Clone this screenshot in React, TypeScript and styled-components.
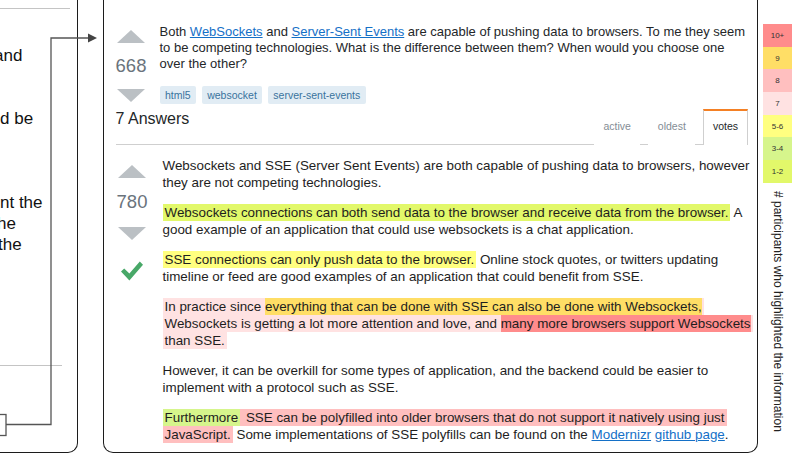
import React from 'react';
import styled, { createGlobalStyle } from 'styled-components';

const GlobalStyle = createGlobalStyle`
  html, body {
    margin: 0;
    padding: 0;
    background: #fff;
  }
  body {
    width: 808px;
    height: 455px;
    overflow: hidden;
    font-family: 'Liberation Sans', Arial, sans-serif;
  }
`;

const Figure = styled.div`
  position: relative;
  display: flex;
  align-items: flex-start;
  width: 808px;
  height: 455px;
  color: #242729;
`;

/* left, cut-off panel */
const SidePanel = styled.div`
  box-sizing: border-box;
  flex-shrink: 0;
  width: 78px;
  height: 453px;
  padding-top: 8px;
  border-right: 1.5px solid #1c1c1c;
  border-bottom: 1.5px solid #1c1c1c;
  border-bottom-right-radius: 10px;
  overflow: hidden;
  display: flex;
  flex-direction: column;
`;

const SideRule = styled.div<{ $width: number; $top?: number }>`
  width: ${({ $width }) => $width}px;
  height: 1px;
  margin-top: ${({ $top }) => $top ?? 0}px;
  background: #c4c4c4;
`;

const SideText = styled.div`
  margin-top: 35.5px;
  font-size: 17px;
  line-height: 21px;
  color: #111;
  white-space: nowrap;
`;

const SideLine = styled.div<{ $shift?: number }>`
  height: 21px;
  margin-left: ${({ $shift }) => -($shift ?? 0)}px;
`;

/* middle, Q&A panel */
const MainPanel = styled.div`
  box-sizing: border-box;
  flex-shrink: 0;
  width: 655px;
  height: 453px;
  margin-left: 25px;
  padding-top: 8px;
  border: 1.5px solid #1c1c1c;
  border-top: none;
  border-radius: 0 0 10px 10px;
  display: flex;
  flex-direction: column;
`;

const TopRule = styled.div`
  height: 1px;
  margin: 0 9.5px 0 8.5px;
  background: #cfcfcf;
`;

const PostRow = styled.div<{ $top: number; $left: number; $gap: number }>`
  display: flex;
  align-items: flex-start;
  margin-top: ${({ $top }) => $top}px;
  padding-left: ${({ $left }) => $left}px;
  gap: ${({ $gap }) => $gap}px;
`;

const VoteColumn = styled.div<{ $top: number; $gap: number }>`
  flex-shrink: 0;
  width: 37px;
  padding-top: ${({ $top }) => $top}px;
  display: flex;
  flex-direction: column;
  align-items: center;
  gap: ${({ $gap }) => $gap}px;
`;

const VoteArrow = styled.div<{ $down?: boolean }>`
  width: 0;
  height: 0;
  border-left: 14px solid transparent;
  border-right: 14px solid transparent;
  ${({ $down }) =>
    $down ? 'border-top: 13px solid #bbc0c4;' : 'border-bottom: 13px solid #bbc0c4;'}
`;

const VoteCount = styled.div`
  font-size: 18.5px;
  line-height: 22px;
  color: #6a737c;
`;

const Accepted = styled.svg`
  width: 22px;
  height: 20px;
  margin-top: 8px;
  fill: #48a868;
`;

const QuestionBody = styled.div`
  padding-top: 1.5px;
  font-size: 13px;
  line-height: 16px;
  white-space: nowrap;
`;

const TagList = styled.div`
  display: flex;
  gap: 5.5px;
  margin-top: 14px;
`;

const Tag = styled.span`
  height: 18px;
  padding: 0 5.5px;
  font-size: 10.5px;
  line-height: 18px;
  color: #39739d;
  background: #e1ecf4;
  border-radius: 2px;
`;

const Link = styled.a`
  color: #1470c7;
  text-decoration: underline;
  text-underline-offset: 1px;
`;

const AnswersHeader = styled.div`
  box-sizing: border-box;
  height: 37px;
  margin: 5px 9.5px 0 11.5px;
  border-bottom: 1px solid #cfcfcf;
  display: flex;
  justify-content: space-between;
  align-items: flex-end;
`;

const AnswersTitle = styled.div`
  align-self: flex-start;
  font-size: 16px;
  line-height: 20px;
  color: #242729;
`;

const Tabs = styled.div`
  display: flex;
  gap: 8px;
`;

const Tab = styled.div<{ $active?: boolean }>`
  box-sizing: border-box;
  height: 36px;
  margin-bottom: -1px;
  padding: 0 8.5px 3px;
  display: flex;
  align-items: center;
  font-size: 10.5px;
  color: ${({ $active }) => ($active ? '#242729' : '#848d95')};
  background: #fff;
  border-top: 2px solid ${({ $active }) => ($active ? '#f48024' : 'transparent')};
  border-left: 1px solid ${({ $active }) => ($active ? '#cfcfcf' : 'transparent')};
  border-right: 1px solid ${({ $active }) => ($active ? '#cfcfcf' : 'transparent')};
`;

const AnswerBody = styled.div`
  font-size: 13.4px;
  line-height: 17px;
  color: #1e1e1e;
  white-space: nowrap;
`;

const Para = styled.p`
  margin: 0 0 13px;
`;

const Mark = styled.span<{ $color: string; $flat?: boolean }>`
  background: ${({ $color }) => $color};
  padding: ${({ $flat }) => ($flat ? '1px 0' : '1px 2px')};
  -webkit-box-decoration-break: clone;
  box-decoration-break: clone;
`;

/* legend */
const LegendColumn = styled.div`
  flex-shrink: 0;
  margin-left: 5px;
  padding-top: 24px;
  display: flex;
  flex-direction: column;
  align-items: center;
`;

const LegendCell = styled.div<{ $color: string }>`
  width: 29px;
  height: 22.7px;
  display: flex;
  align-items: center;
  justify-content: center;
  font-size: 8px;
  color: #333;
  background: ${({ $color }) => $color};
`;

const AxisLabel = styled.div`
  margin-top: 8px;
  writing-mode: vertical-rl;
  font-size: 12px;
  color: #222;
  white-space: nowrap;
`;

const Connector = styled.svg`
  position: absolute;
  top: 0;
  left: 0;
  pointer-events: none;
`;

const HL = {
  hot: '#ff8c8c',
  nine: '#ffde66',
  eight: '#ffbfbf',
  seven: '#ffe2e2',
  five: '#ffff80',
  three: '#d6f58c',
  one: '#e2f86a',
};

const legend = [
  { label: '10+', color: HL.hot },
  { label: '9', color: HL.nine },
  { label: '8', color: HL.eight },
  { label: '7', color: HL.seven },
  { label: '5-6', color: HL.five },
  { label: '3-4', color: HL.three },
  { label: '1-2', color: HL.one },
];

const sideLines: { text: string; shift?: number }[] = [
  { text: 'and', shift: 6 },
  { text: '' },
  { text: '' },
  { text: 'd be' },
  { text: '' },
  { text: '' },
  { text: '' },
  { text: 'nt the' },
  { text: 'he', shift: 3 },
  { text: 'the', shift: 2 },
];

const App: React.FC = () => (
  <>
    <GlobalStyle />
    <Figure>
      <SidePanel>
        <SideRule $width={70} />
        <SideText>
          {sideLines.map((line, i) => (
            <SideLine key={i} $shift={line.shift}>
              {line.text}
            </SideLine>
          ))}
        </SideText>
        <SideRule $width={62} $top={110} />
      </SidePanel>

      <MainPanel>
        <TopRule />
        <PostRow $top={14} $left={8.5} $gap={10}>
          <VoteColumn $top={8} $gap={12}>
            <VoteArrow />
            <VoteCount>668</VoteCount>
            <VoteArrow $down />
          </VoteColumn>
          <div>
            <QuestionBody>
              Both <Link>WebSockets</Link> and <Link>Server-Sent Events</Link> are capable of
              pushing data to browsers. To me they seem
              <br />
              to be competing technologies. What is the difference between them? When would you
              choose one
              <br />
              over the other?
            </QuestionBody>
            <TagList>
              <Tag>html5</Tag>
              <Tag>websocket</Tag>
              <Tag>server-sent-events</Tag>
            </TagList>
          </div>
        </PostRow>

        <AnswersHeader>
          <AnswersTitle>7 Answers</AnswersTitle>
          <Tabs>
            <Tab>active</Tab>
            <Tab>oldest</Tab>
            <Tab $active>votes</Tab>
          </Tabs>
        </AnswersHeader>

        <PostRow $top={12} $left={9.5} $gap={12}>
          <VoteColumn $top={8} $gap={13.5}>
            <VoteArrow />
            <VoteCount>780</VoteCount>
            <VoteArrow $down />
            <Accepted viewBox="0 0 22 20">
              <path d="M0 10.5 L3.2 7.4 L8.4 12.6 L18.8 0.6 L22 3.8 L8.4 19.6 Z" />
            </Accepted>
          </VoteColumn>
          <AnswerBody>
            <Para>
              Websockets and SSE (Server Sent Events) are both capable of pushing data to
              browsers, however
              <br />
              they are not competing technologies.
            </Para>
            <Para>
              <Mark $color={HL.one}>
                Websockets connections can both send data to the browser and receive data from
                the browser.
              </Mark>{' '}
              A
              <br />
              good example of an application that could use websockets is a chat application.
            </Para>
            <Para>
              <Mark $color={HL.five}>SSE connections can only push data to the browser.</Mark>{' '}
              Online stock quotes, or twitters updating
              <br />
              timeline or feed are good examples of an application that could benefit from SSE.
            </Para>
            <Para>
              <Mark $color={HL.seven}>
                In practice since{' '}
                <Mark $color={HL.nine} $flat>
                  everything that can be done with SSE can also be done with Websockets,
                </Mark>
                <br />
                Websockets is getting a lot more attention and love, and{' '}
                <Mark $color={HL.hot} $flat>
                  many more browsers support Websockets
                </Mark>
                <br />
                than SSE.
              </Mark>
            </Para>
            <Para>
              However, it can be overkill for some types of application, and the backend could be
              easier to
              <br />
              implement with a protocol such as SSE.
            </Para>
            <Para>
              <Mark $color={HL.three}>Furthermore</Mark>
              <Mark $color={HL.eight}>
                {' '}
                SSE can be polyfilled into older browsers that do not support it natively using
                just
                <br />
                JavaScript.
              </Mark>{' '}
              Some implementations of SSE polyfills can be found on the <Link>Modernizr</Link>{' '}
              <Link>github page</Link>.
            </Para>
          </AnswerBody>
        </PostRow>
      </MainPanel>

      <LegendColumn>
        {legend.map((item) => (
          <LegendCell key={item.label} $color={item.color}>
            {item.label}
          </LegendCell>
        ))}
        <AxisLabel># participants who highlighted the information</AxisLabel>
      </LegendColumn>

      <Connector width="808" height="455" viewBox="0 0 808 455">
        <rect x="-2" y="414.5" width="8" height="21" fill="#fff" stroke="#555" strokeWidth="1.3" />
        <path d="M6 424.5 H51 V38 H89" fill="none" stroke="#555" strokeWidth="1.3" />
        <polygon points="88,33.5 97,38 88,42.5" fill="#444" />
      </Connector>
    </Figure>
  </>
);

export default App;
